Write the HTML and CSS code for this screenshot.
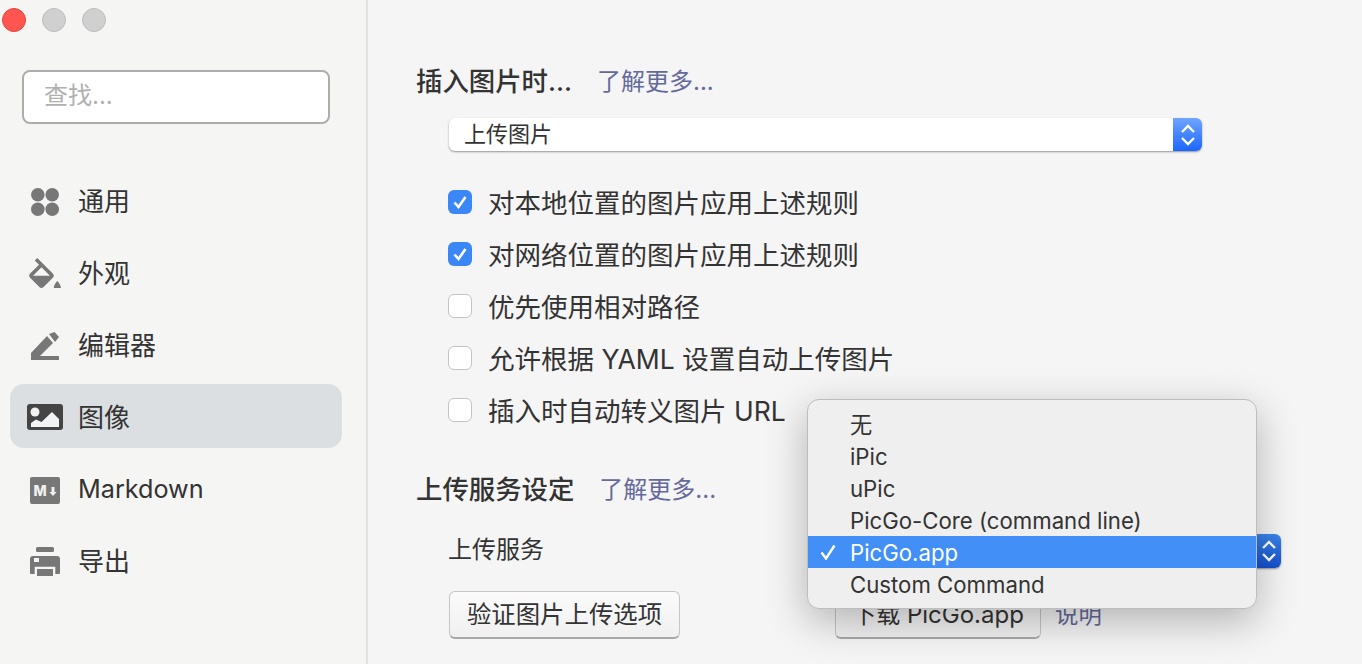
FILE: index.html
```html
<!DOCTYPE html>
<html lang="zh-CN">
  <head>
    <meta charset="UTF-8" />
    <title>偏好设置</title>
    <link rel="stylesheet" href="styles.css">
  </head>
  <body>
    <div class="sidebar">
      <div class="traffic">
        <span class="dot dot-red"></span>
        <span class="dot"></span>
        <span class="dot"></span>
      </div>
      <input class="search" type="text" placeholder="查找..." />
      <div class="nav">
        <div class="nav-item">
          <svg class="nav-icon" viewBox="0 0 30 30">
            <circle cx="7.8" cy="8.8" r="6.8" />
            <circle cx="22.2" cy="8.8" r="6.8" />
            <circle cx="7.8" cy="23.2" r="6.8" />
            <circle cx="22.2" cy="23.2" r="6.8" />
          </svg>
          <span class="label">通用</span>
        </div>
        <div class="nav-item">
          <svg class="nav-icon" viewBox="3.5 0 17 17">
            <path d="M16.56 8.94L7.62 0 6.21 1.41l2.38 2.38-5.15 5.15c-.59.59-.59 1.54 0 2.12l5.5 5.5c.29.29.68.44 1.06.44s.77-.15 1.06-.44l5.5-5.5c.59-.58.59-1.53 0-2.12zM5.21 10L10 5.21 14.79 10H5.21zM19 13s-1.6 1.6-2 3.6c0 .1 0 .4.1.4h3.8c.1 0 .1-.3.1-.4-.4-2-2-3.6-2-3.6z" />
          </svg>
          <span class="label">外观</span>
        </div>
        <div class="nav-item">
          <svg class="nav-icon" viewBox="0 0 30 30">
            <path d="M1 23 L17 6 L23 13 L10 26 H1 Z" />
            <path d="M19 4 L24.5 2 L29 7 L25 12 Z" />
            <rect x="1" y="26" width="28" height="4" rx="0.5" />
          </svg>
          <span class="label">编辑器</span>
        </div>
        <div class="nav-item active">
          <svg class="nav-icon nav-icon-wide" viewBox="0 0 36 26">
            <rect x="0" y="0" width="36" height="26" rx="3" class="icon-dark" />
            <circle cx="8" cy="8" r="4.5" class="icon-cut" />
            <path d="M4 23 V19 L9 15.5 L14.5 18 L25 8 L32 15 V23 Z" class="icon-cut" />
          </svg>
          <span class="label">图像</span>
        </div>
        <div class="nav-item">
          <svg class="nav-icon" viewBox="0 0 30 30">
            <rect x="0" y="3" width="30" height="27" rx="2" />
            <text x="3.5" y="22" class="md-mark">M</text>
            <path class="md-arrow" d="M21.5 13 H24.5 V18 H26.7 L23 22 L19.3 18 H21.5 Z" />
          </svg>
          <span class="label-latin">Markdown</span>
        </div>
        <div class="nav-item">
          <svg class="nav-icon" viewBox="0 0 30 30">
            <rect x="6" y="1" width="18" height="5" rx="1.5" />
            <path d="M3 10 H27 Q30 10 30 13 V27 Q30 28 29 28 H25.3 V20.7 H4.7 V28 H1 Q0 28 0 27 V13 Q0 10 3 10 Z M4 12 V16 H9 V12 Z" fill-rule="evenodd" />
            <rect x="7" y="23" width="16" height="7" />
          </svg>
          <span class="label">导出</span>
        </div>
      </div>
    </div>

    <div class="main">
      <div class="heading">
        <span class="heading-title">插入图片时...</span>
        <span class="link">了解更多...</span>
      </div>
      <div class="select select-wide">
        <span class="select-text">上传图片</span>
        <span class="stepper">
          <svg viewBox="0 0 16 22" width="16" height="22">
            <path d="M2 8 L8 2 L14 8 M2 14 L8 20 L14 14" />
          </svg>
        </span>
      </div>

      <div class="options">
        <div class="option">
          <span class="check checked">
            <svg viewBox="0 0 24 24" width="24" height="24"><path d="M6.5 12.5 L10.5 17 L17.5 7" /></svg>
          </span>
          <span class="option-text">对本地位置的图片应用上述规则</span>
        </div>
        <div class="option">
          <span class="check checked">
            <svg viewBox="0 0 24 24" width="24" height="24"><path d="M6.5 12.5 L10.5 17 L17.5 7" /></svg>
          </span>
          <span class="option-text">对网络位置的图片应用上述规则</span>
        </div>
        <div class="option"><span class="check"></span><span class="option-text">优先使用相对路径</span></div>
        <div class="option"><span class="check"></span><span class="option-text">允许根据 YAML 设置自动上传图片</span></div>
        <div class="option"><span class="check"></span><span class="option-text">插入时自动转义图片 URL</span></div>
      </div>

      <div class="heading heading-second">
        <span class="heading-title">上传服务设定</span>
        <span class="link">了解更多...</span>
      </div>

      <div class="service">
        <span class="service-label">上传服务</span>
        <div class="select select-service">
          <span class="stepper stepper-dark">
            <svg viewBox="0 0 16 22" width="16" height="22">
              <path d="M2 8 L8 2 L14 8 M2 14 L8 20 L14 14" />
            </svg>
          </span>
        </div>
      </div>

      <div class="actions">
        <button class="btn btn-verify">验证图片上传选项</button>
        <button class="btn btn-download">下载 PicGo.app</button>
        <span class="link link-small">说明</span>
      </div>
    </div>

    <div class="menu">
      <div class="menu-item">无</div>
      <div class="menu-item">iPic</div>
      <div class="menu-item">uPic</div>
      <div class="menu-item">PicGo-Core (command line)</div>
      <div class="menu-item selected">
        <svg class="menu-check" viewBox="0 0 16 16" width="16" height="16"><path d="M1.5 8.5 L6 14.5 L14.5 1.5" /></svg>
        PicGo.app
      </div>
      <div class="menu-item">Custom Command</div>
    </div>
  </body>
</html>
```

FILE: styles.css
```css
body {
  font-family: "Inter", "Noto Sans CJK SC", sans-serif;
  font-size: 26px;
  color: #333;
  background-color: #f5f5f5;
  margin: 0;
  display: flex;
  height: 664px;
  overflow: hidden;
}

/* sidebar */
.sidebar {
  width: 366px;
  flex-shrink: 0;
  background-color: #f5f5f4;
  border-right: 2px solid #e2e2e2;
  padding-top: 8px;
}

.traffic {
  display: flex;
  gap: 16px;
  padding-left: 2px;
}

.dot {
  width: 24px;
  height: 24px;
  box-sizing: border-box;
  border-radius: 50%;
  background-color: #d0d0d0;
  border: 1px solid #bdbdbd;
}

.dot-red {
  background-color: #ff5550;
  border-color: #e5443f;
}

.search {
  display: block;
  box-sizing: border-box;
  width: 308px;
  height: 54px;
  margin: 38px 0 0 22px;
  padding: 0 20px 4px;
  background-color: #fff;
  border: 2px solid #adadad;
  border-radius: 8px;
  font: inherit;
  font-size: 24px;
  outline: none;
}

.search::placeholder {
  color: #b0b0b0;
}

.nav {
  display: flex;
  flex-direction: column;
  gap: 8px;
  margin: 44px 24px 0 10px;
}

.nav-item {
  height: 64px;
  display: flex;
  align-items: center;
  gap: 19px;
  padding-left: 20px;
  border-radius: 14px;
}

.nav-item.active {
  background-color: #dcdfe2;
}

.label {
  padding-bottom: 2px;
  margin-left: -1px;
}

.label-latin {
  font-size: 25.2px;
  margin-left: -1px;
  padding-top: 2px;
}

.nav-icon {
  width: 30px;
  height: 30px;
  margin-top: 2px;
  fill: #777;
  flex-shrink: 0;
  overflow: visible;
}

.nav-icon-wide {
  width: 36px;
  height: 26px;
  margin-left: -3px;
  margin-right: -3px;
}

.icon-dark {
  fill: #444;
}

.icon-cut {
  fill: #f2f3f4;
}

.md-mark {
  fill: #f0f0f0;
  font-size: 14px;
  font-weight: 800;
}

.md-arrow {
  fill: #f0f0f0;
}

/* main panel */
.main {
  flex: 1;
  padding: 63px 0 0 49px;
}

.heading {
  height: 36px;
  box-sizing: border-box;
  padding-bottom: 4px;
  display: flex;
  align-items: center;
}

.heading-title {
  font-weight: 500;
  font-size: 26.4px;
  margin-left: -1px;
  margin-right: 25px;
}

.heading-second {
  margin-top: 35px;
}

.link {
  color: #65699c;
  font-size: 24px;
}

.select {
  display: flex;
  justify-content: space-between;
  align-items: stretch;
  box-sizing: border-box;
  height: 33px;
  background-color: #fff;
  border-radius: 6px;
  box-shadow: 0 1px 2px rgba(0, 0, 0, 0.4);
  overflow: hidden;
}

.select-wide {
  width: 753px;
  margin: 19px 0 0 32px;
}

.select-text {
  font-size: 22px;
  padding-left: 15px;
  line-height: 33px;
}

.stepper {
  width: 29px;
  display: flex;
  align-items: center;
  justify-content: center;
  background: linear-gradient(#70a4ff, #1a66ff);
}

.stepper svg path {
  fill: none;
  stroke: #fff;
  stroke-width: 2.4;
}

.stepper-dark {
  width: 25px;
  background: linear-gradient(#3a85ec, #1450cf);
}

.options {
  margin: 25px 0 0 31px;
}

.option {
  height: 52px;
  display: flex;
  align-items: center;
  gap: 16px;
  font-size: 26.5px;
}

.option-text {
  padding-bottom: 2px;
}

.check {
  width: 24px;
  height: 24px;
  box-sizing: border-box;
  flex-shrink: 0;
  background-color: #fff;
  border: 1px solid #c4c4c4;
  border-radius: 6px;
}

.check svg {
  display: block;
}

.check.checked {
  background-color: #3b87f7;
  border: none;
}

.check svg path {
  fill: none;
  stroke: #fff;
  stroke-width: 2.6;
}

.service {
  display: flex;
  align-items: center;
  justify-content: space-between;
  width: 832px;
  height: 34px;
  margin: 27px 0 0 32px;
  font-size: 24px;
}

.service-label {
  padding-bottom: 8px;
  margin-left: -1px;
}

.select-service {
  width: 460px;
  height: 34px;
  justify-content: flex-end;
}

.actions {
  display: flex;
  align-items: center;
  margin: 23px 0 0 32px;
}

.btn {
  height: 48px;
  box-sizing: border-box;
  padding: 0 0 4px;
  font: inherit;
  font-size: 24.4px;
  color: #333;
  background: linear-gradient(#fbfbfb, #f0f0f0);
  border: 1px solid #c6c6c6;
  border-bottom: 2px solid #a8a8a8;
  border-radius: 6px;
}

.btn-verify {
  width: 231px;
}

.btn-download {
  width: 206px;
  margin-left: 155px;
  font-size: 24px;
}

.link-small {
  margin-left: 14px;
  font-size: 23.4px;
  padding-bottom: 5px;
}

/* popup menu */
.menu {
  position: absolute;
  left: 807px;
  top: 399px;
  box-sizing: border-box;
  width: 450px;
  height: 210px;
  padding: 8px 0;
  background-color: #efefef;
  border: 1px solid #bdbdbd;
  border-radius: 12px;
  box-shadow: 0 12px 40px rgba(0, 0, 0, 0.28);
  font-size: 22.2px;
  overflow: hidden;
}

.menu-item {
  position: relative;
  height: 32px;
  line-height: 33px;
  padding-left: 42px;
}

.menu-item.selected {
  background-color: #418ff7;
  color: #fff;
}

.menu-check {
  position: absolute;
  left: 12px;
  top: 8px;
}

.menu-check path {
  fill: none;
  stroke: #fff;
  stroke-width: 2.4;
}
```
